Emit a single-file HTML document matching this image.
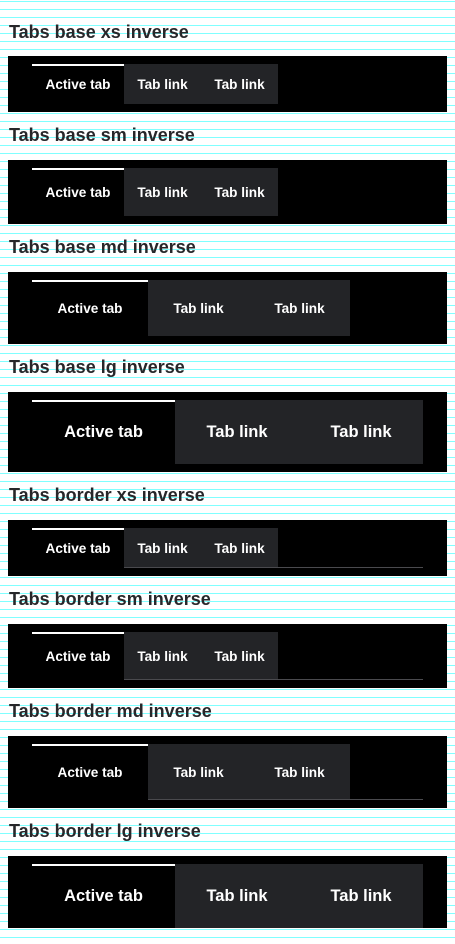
<!DOCTYPE html>
<html><head><style>
body{margin:0;width:455px;height:944px;position:relative;overflow:hidden;font-family:"Liberation Sans",sans-serif;background:#fff}
svg.bg{position:absolute;left:0;top:0}
.t{position:absolute;left:9px;font-size:18px;font-weight:bold;color:#27272a;line-height:20px}
.b{position:absolute;left:8px;width:439px;background:#000}
.tab{position:absolute;color:#fff;font-weight:bold;display:flex;align-items:center;justify-content:center;box-sizing:border-box}
.a{box-shadow:inset 0 2px 0 #fff}
.g{background:#232427}
.s{font-size:13.6px}
.l{font-size:16.5px}
.ln{position:absolute;height:1px;background:#4a4a4e}
</style></head><body>
<svg class="bg" width="455" height="944" xmlns="http://www.w3.org/2000/svg">
<defs><pattern id="p" width="455" height="8" patternUnits="userSpaceOnUse" y="1"><rect x="0" y="0" width="455" height="1" fill="#80ffff"/></pattern></defs>
<rect width="455" height="944" fill="url(#p)"/>
</svg>

<div class="t" style="top:22px">Tabs base xs inverse</div>
<div class="b" style="top:56px;height:56px">
<div class="tab a s" style="left:24px;top:8px;width:92px;height:40px">Active tab</div>
<div class="tab g s" style="left:116px;top:8px;width:77px;height:40px">Tab link</div>
<div class="tab g s" style="left:193px;top:8px;width:77px;height:40px">Tab link</div>
</div>

<div class="t" style="top:125px">Tabs base sm inverse</div>
<div class="b" style="top:160px;height:64px">
<div class="tab a s" style="left:24px;top:8px;width:92px;height:48px">Active tab</div>
<div class="tab g s" style="left:116px;top:8px;width:77px;height:48px">Tab link</div>
<div class="tab g s" style="left:193px;top:8px;width:77px;height:48px">Tab link</div>
</div>

<div class="t" style="top:237px">Tabs base md inverse</div>
<div class="b" style="top:272px;height:72px">
<div class="tab a s" style="left:24px;top:8px;width:116px;height:56px">Active tab</div>
<div class="tab g s" style="left:140px;top:8px;width:101px;height:56px">Tab link</div>
<div class="tab g s" style="left:241px;top:8px;width:101px;height:56px">Tab link</div>
</div>

<div class="t" style="top:357px">Tabs base lg inverse</div>
<div class="b" style="top:392px;height:80px">
<div class="tab a l" style="left:24px;top:8px;width:143px;height:64px">Active tab</div>
<div class="tab g l" style="left:167px;top:8px;width:124px;height:64px">Tab link</div>
<div class="tab g l" style="left:291px;top:8px;width:124px;height:64px">Tab link</div>
</div>

<div class="t" style="top:485px">Tabs border xs inverse</div>
<div class="b" style="top:520px;height:56px">
<div class="tab a s" style="left:24px;top:8px;width:92px;height:40px">Active tab</div>
<div class="tab g s" style="left:116px;top:8px;width:77px;height:40px">Tab link</div>
<div class="tab g s" style="left:193px;top:8px;width:77px;height:40px">Tab link</div>
<div class="ln" style="left:116px;top:47px;width:299px"></div>
</div>

<div class="t" style="top:589px">Tabs border sm inverse</div>
<div class="b" style="top:624px;height:64px">
<div class="tab a s" style="left:24px;top:8px;width:92px;height:48px">Active tab</div>
<div class="tab g s" style="left:116px;top:8px;width:77px;height:48px">Tab link</div>
<div class="tab g s" style="left:193px;top:8px;width:77px;height:48px">Tab link</div>
<div class="ln" style="left:116px;top:55px;width:299px"></div>
</div>

<div class="t" style="top:701px">Tabs border md inverse</div>
<div class="b" style="top:736px;height:72px">
<div class="tab a s" style="left:24px;top:8px;width:116px;height:56px">Active tab</div>
<div class="tab g s" style="left:140px;top:8px;width:101px;height:56px">Tab link</div>
<div class="tab g s" style="left:241px;top:8px;width:101px;height:56px">Tab link</div>
<div class="ln" style="left:140px;top:63px;width:275px"></div>
</div>

<div class="t" style="top:821px">Tabs border lg inverse</div>
<div class="b" style="top:856px;height:72px">
<div class="tab a l" style="left:24px;top:8px;width:143px;height:64px">Active tab</div>
<div class="tab g l" style="left:167px;top:8px;width:124px;height:64px">Tab link</div>
<div class="tab g l" style="left:291px;top:8px;width:124px;height:64px">Tab link</div>
</div>

</body></html>
